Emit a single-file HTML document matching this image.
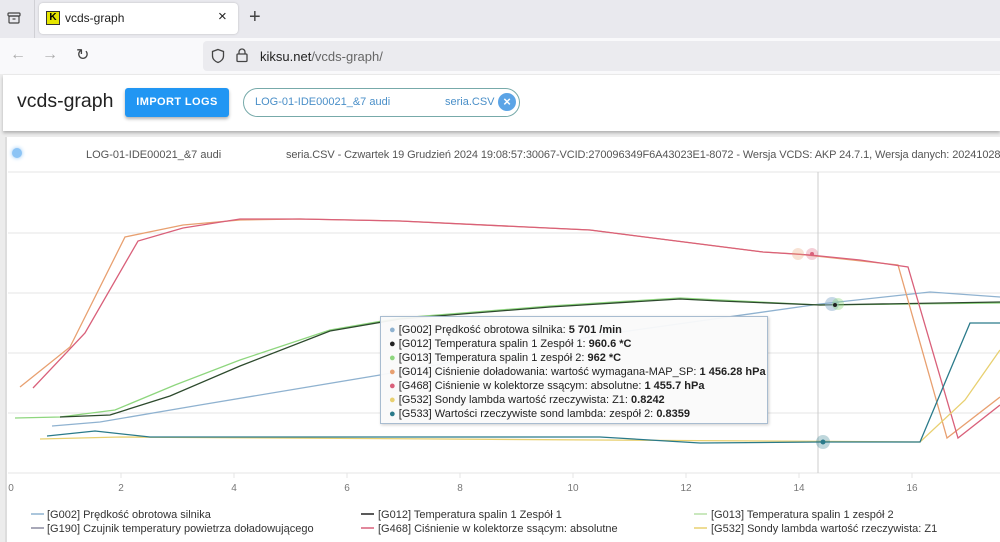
<!DOCTYPE html>
<html><head><meta charset="utf-8"><style>
*{margin:0;padding:0;box-sizing:border-box}
body{width:1000px;height:542px;overflow:hidden;background:#ececec;font-family:"Liberation Sans",sans-serif;position:relative}
.abs{position:absolute}
</style></head><body>
<div class="abs" style="left:0;top:0;width:1000px;height:38px;background:#e9e9ee"></div>
<div class="abs" style="left:0;top:38px;width:1000px;height:36px;background:#f9f9fb"></div>
<div class="abs" style="left:34px;top:0;width:1px;height:38px;background:#d0d0d5"></div>
<svg class="abs" style="left:6px;top:10px" width="16" height="16" viewBox="0 0 16 16"><rect x="2" y="3" width="12" height="3" rx="1" fill="none" stroke="#444" stroke-width="1.2"/><rect x="3" y="6" width="10" height="7" rx="1" fill="none" stroke="#444" stroke-width="1.2"/><line x1="6.5" y1="9" x2="9.5" y2="9" stroke="#444" stroke-width="1.2"/></svg>
<div class="abs" style="left:39px;top:3px;width:199px;height:31px;background:#fff;border-radius:4px;box-shadow:0 0 2px rgba(0,0,0,.2)"></div>
<div class="abs" style="left:46px;top:11px;width:14px;height:14px;background:#e5e500;border:1px solid #333;font-size:10px;font-weight:bold;text-align:center;line-height:12px">K</div>
<div class="abs" style="left:65px;top:11px;font-size:12px;color:#222">vcds-graph</div>
<div class="abs" style="left:218px;top:8px;font-size:15px;color:#222">×</div>
<div class="abs" style="left:249px;top:6px;font-size:20px;color:#444">+</div>
<div class="abs" style="left:10px;top:46px;font-size:16px;color:#aaa">←</div>
<div class="abs" style="left:42px;top:46px;font-size:16px;color:#aaa">→</div>
<div class="abs" style="left:76px;top:45px;font-size:16px;color:#444">↻</div>
<div class="abs" style="left:203px;top:41px;width:797px;height:30px;background:#ebebef;border-radius:4px 0 0 4px"></div>
<svg class="abs" style="left:210px;top:48px" width="16" height="16" viewBox="0 0 16 16"><path d="M8 1.5 L13.5 3.5 V8 C13.5 11 11 13.5 8 14.5 C5 13.5 2.5 11 2.5 8 V3.5 Z" fill="none" stroke="#444" stroke-width="1.3"/></svg>
<svg class="abs" style="left:235px;top:47px" width="14" height="16" viewBox="0 0 14 16"><path d="M4 7 V5 A3 3 0 0 1 10 5 V7" fill="none" stroke="#444" stroke-width="1.3"/><rect x="2" y="7" width="10" height="7.5" rx="1" fill="none" stroke="#444" stroke-width="1.3"/></svg>
<div class="abs" style="left:260px;top:49px;font-size:13px;color:#222">kiksu.net<span style="color:#666">/vcds-graph/</span></div>
<div class="abs" style="left:3px;top:75px;width:997px;height:56px;background:#fff;box-shadow:0 2px 3px rgba(0,0,0,.25)"></div>
<div class="abs" style="left:17px;top:90px;font-size:19.5px;color:#222">vcds-graph</div>
<div class="abs" style="left:125px;top:88px;width:104px;height:29px;background:#2196f3;border-radius:3px;box-shadow:0 2px 3px rgba(0,0,0,.3);color:#fff;font-size:11px;font-weight:bold;text-align:center;line-height:29px;letter-spacing:.4px">IMPORT LOGS</div>
<div class="abs" style="left:243px;top:88px;width:277px;height:29px;border:1px solid #7aa;border-radius:15px"></div>
<div class="abs" style="left:255px;top:96px;font-size:11px;color:#4a8fc8">LOG-01-IDE00021_&amp;7 audi</div>
<div class="abs" style="left:445px;top:96px;font-size:11px;color:#4a8fc8">seria.CSV</div>
<div class="abs" style="left:498px;top:93px;width:18px;height:18px;border-radius:50%;background:#5ba4e6;color:#fff;font-size:13px;font-weight:bold;text-align:center;line-height:18px">×</div>
<div class="abs" style="left:5px;top:137px;width:995px;height:405px;background:#fff;border-left:2px solid #ddd"></div>
<div class="abs" style="left:12px;top:148px;width:10px;height:10px;border-radius:50%;background:#8cc4f5;box-shadow:0 0 4px #8cc4f5"></div>
<div class="abs" style="left:86px;top:149px;font-size:11px;color:#555">LOG-01-IDE00021_&amp;7 audi</div>
<div class="abs" style="left:286px;top:149px;font-size:11px;color:#555;white-space:nowrap;letter-spacing:-0.1px">seria.CSV - Czwartek 19 Grudzień 2024 19:08:57:30067-VCID:270096349F6A43023E1-8072 - Wersja VCDS: AKP 24.7.1, Wersja danych: 20241028</div>
<svg class="abs" style="left:0;top:0" width="1000" height="542">
<g stroke="#e4e4e4" stroke-width="1">
<line x1="8" y1="172" x2="1000" y2="172"/><line x1="8" y1="233" x2="1000" y2="233"/><line x1="8" y1="293" x2="1000" y2="293"/><line x1="8" y1="353" x2="1000" y2="353"/><line x1="8" y1="413" x2="1000" y2="413"/><line x1="8" y1="473" x2="1000" y2="473"/>
<line x1="121" y1="473" x2="121" y2="478"/><line x1="234" y1="473" x2="234" y2="478"/><line x1="347" y1="473" x2="347" y2="478"/><line x1="460" y1="473" x2="460" y2="478"/><line x1="573" y1="473" x2="573" y2="478"/><line x1="686" y1="473" x2="686" y2="478"/><line x1="799" y1="473" x2="799" y2="478"/><line x1="912" y1="473" x2="912" y2="478"/>
</g>
<line x1="818" y1="172" x2="818" y2="473" stroke="#ccc"/>
<g fill="none" stroke-width="1.3">
<polyline stroke="#8fb2d0" points="52,426 100,422 200,405 380,375 600,335 820,304 930,292 1000,297"/>
<polyline stroke="#8ed67e" points="15,418 60,417 115,410 175,385 240,360 330,330 400,318 550,306 680,298 720,300 820,305 1000,303"/>
<polyline stroke="#2d4a2d" points="60,417 110,415 170,396 240,366 330,331 400,319 550,307 680,299 720,301 820,305 1000,302"/>
<polyline stroke="#e8a070" points="20,387 70,347 125,237 183,225 240,220 300,219 400,221 590,230 763,252 797,254 898,265 947,438 1000,397"/>
<polyline stroke="#d9607a" points="33,388 85,333 138,241 183,228 240,219 300,219 400,221 590,230 763,252 810,255 860,260 908,267 958,438 1000,405"/>
<polyline stroke="#e8d070" points="40,439 120,437 920,442 965,400 1000,350"/>
<polyline stroke="#2a7a8a" points="47,436 95,431 150,437 600,437 700,443 820,442 920,442 970,323 1000,323"/>
</g>
<circle cx="798" cy="254" r="6" fill="#e8a070" opacity=".3"/><circle cx="812" cy="254" r="6" fill="#d9607a" opacity=".3"/><circle cx="812" cy="254" r="2" fill="#d9607a"/>
<circle cx="832" cy="304" r="7" fill="#8fb2d0" opacity=".5"/><circle cx="838" cy="304" r="6" fill="#8ed67e" opacity=".4"/><circle cx="835" cy="305" r="2" fill="#222"/>
<circle cx="823" cy="442" r="7" fill="#2a7a8a" opacity=".3"/><circle cx="823" cy="442" r="2.5" fill="#2a7a8a"/>
<g font-family="Liberation Sans, sans-serif" font-size="10" fill="#777" text-anchor="middle">
<text x="11" y="491">0</text><text x="121" y="491">2</text><text x="234" y="491">4</text><text x="347" y="491">6</text><text x="460" y="491">8</text><text x="573" y="491">10</text><text x="686" y="491">12</text><text x="799" y="491">14</text><text x="912" y="491">16</text>
</g>
<g stroke-width="1.5">
<line x1="31" y1="514" x2="44" y2="514" stroke="#8fb2d0"/><line x1="31" y1="528" x2="44" y2="528" stroke="#8a8aa0"/>
<line x1="361" y1="514" x2="374" y2="514" stroke="#222"/><line x1="361" y1="528" x2="374" y2="528" stroke="#d9607a"/>
<line x1="694" y1="514" x2="707" y2="514" stroke="#b8e0a8"/><line x1="694" y1="528" x2="707" y2="528" stroke="#e8d070"/>
</g>
<g font-family="Liberation Sans, sans-serif" font-size="11" fill="#333">
<text x="47" y="518">[G002] Prędkość obrotowa silnika</text><text x="47" y="532">[G190] Czujnik temperatury powietrza doładowującego</text>
<text x="378" y="518">[G012] Temperatura spalin 1 Zespół 1</text><text x="378" y="532">[G468] Ciśnienie w kolektorze ssącym: absolutne</text>
<text x="711" y="518">[G013] Temperatura spalin 1 zespół 2</text><text x="711" y="532">[G532] Sondy lambda wartość rzeczywista: Z1</text>
</g>
</svg>
<div class="abs" style="left:380px;top:316px;width:388px;height:108px;background:rgba(250,250,250,.95);border:1px solid #a8bcd0;box-shadow:1px 1px 3px rgba(0,0,0,.2);font-size:11px;color:#222;line-height:14px;padding:6px 0 0 8px;white-space:nowrap">
<div><span style="color:#8fb2d0">●</span> [G002] Prędkość obrotowa silnika: <b>5 701 /min</b></div>
<div><span style="color:#222">●</span> [G012] Temperatura spalin 1 Zespół 1: <b>960.6 *C</b></div>
<div><span style="color:#8ed67e">●</span> [G013] Temperatura spalin 1 zespół 2: <b>962 *C</b></div>
<div><span style="color:#e8a070">●</span> [G014] Ciśnienie doładowania: wartość wymagana-MAP_SP: <b>1 456.28 hPa</b></div>
<div><span style="color:#d9607a">●</span> [G468] Ciśnienie w kolektorze ssącym: absolutne: <b>1 455.7 hPa</b></div>
<div><span style="color:#e8d070">●</span> [G532] Sondy lambda wartość rzeczywista: Z1: <b>0.8242</b></div>
<div><span style="color:#2a7a8a">●</span> [G533] Wartości rzeczywiste sond lambda: zespół 2: <b>0.8359</b></div>
</div>
</body></html>
